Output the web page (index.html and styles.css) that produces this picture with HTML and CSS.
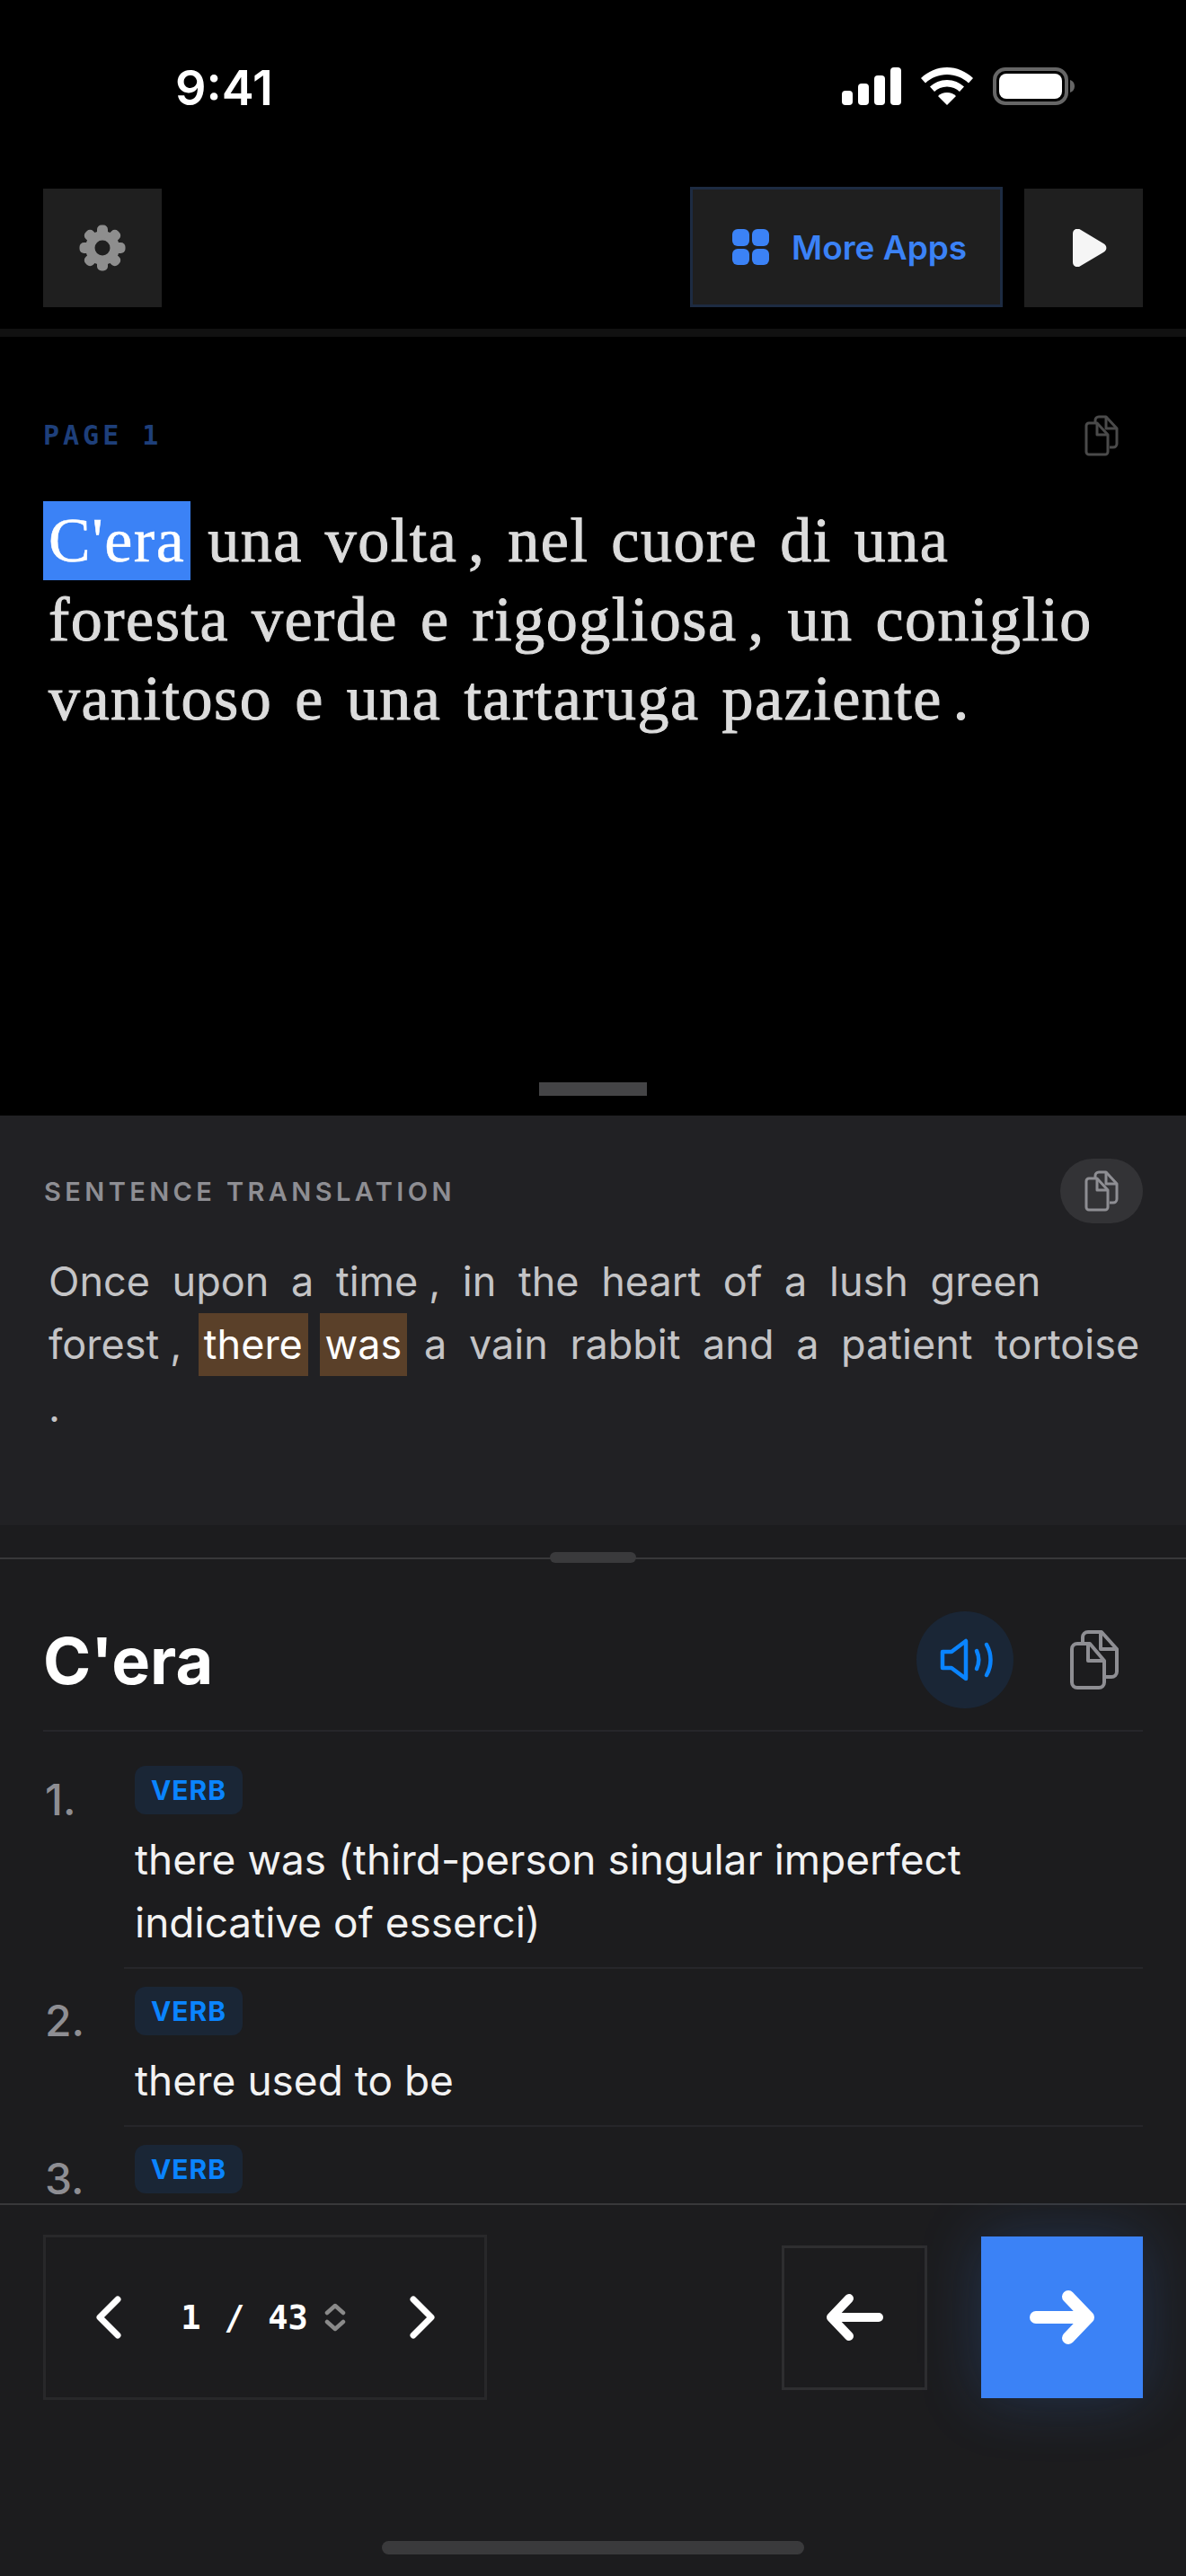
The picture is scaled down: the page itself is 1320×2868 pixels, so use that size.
FILE: index.html
```html
<!DOCTYPE html>
<html lang="it">
<head>
    <meta charset="UTF-8">
    <title>Reader</title>
    <link rel="stylesheet" href="styles.css">
</head>
<body>
<div class="main">
    <div class="status">
        <span class="time">9:41</span>
        <div class="status_icons">
            <svg width="66" height="42" viewBox="0 0 66 42"><rect x="0" y="26" width="12" height="16" rx="4"/><rect x="18" y="18" width="12" height="24" rx="4"/><rect x="36" y="9" width="12" height="33" rx="4"/><rect x="54" y="0" width="12" height="42" rx="4"/></svg>
            <svg width="58" height="42" viewBox="0 0 58 42"><path d="M29 0C18 0 8 4.500 0 12l5 5.500C11.500 11.500 20 8 29 8s17.500 3.500 24 9.500l5-5.500C50 4.500 40 0 29 0z"/><path d="M29 14c-7.500 0-14 3-19 7.500l5 5.500c3.500-3.300 8.500-5.500 14-5.500s10.500 2.200 14 5.500l5-5.500C43 17 36.500 14 29 14z"/><path d="M29 28c-4 0-7.500 1.500-10 4l10 10 10-10c-2.500-2.500-6-4-10-4z"/></svg>
            <svg class="battery" width="92" height="42" viewBox="0 0 92 42"><rect x="2" y="2" width="80" height="38" rx="12" fill="none" stroke="#666" stroke-width="4"/><rect x="7" y="7" width="70" height="28" rx="8"/><path d="M86 14c3 .8 5 3.500 5 7s-2 6.200-5 7z" fill="#666"/></svg>
        </div>
    </div>

    <div class="toolbar">
        <a class="tool_btn" href="#">
            <svg width="52" height="52" viewBox="-26 -26 52 52"><g fill="#8e8e8e"><circle r="19"/><rect x="-6" y="-25.500" width="12" height="51" rx="5"/><rect x="-6" y="-25.500" width="12" height="51" rx="5" transform="rotate(45)"/><rect x="-6" y="-25.500" width="12" height="51" rx="5" transform="rotate(90)"/><rect x="-6" y="-25.500" width="12" height="51" rx="5" transform="rotate(135)"/></g><circle r="8.500" fill="#1f1f1f"/></svg>
        </a>
        <div class="tool_right">
            <a class="apps_btn" href="#">
                <span class="apps_grid"><i></i><i></i><i></i><i></i></span>
                More Apps
            </a>
            <a class="tool_btn" href="#">
                <svg class="play_icon" width="38" height="42" viewBox="0 0 38 42"><path fill="#f5f5f5" d="M0 5C0 1 3.500-1 7-.2L34 16c4.500 2.500 4.500 7.500 0 10L7 42c-3.500 1-7-1-7-5z"/></svg>
            </a>
        </div>
    </div>

    <div class="reader">
        <div class="reader_head">
            <span class="page_label">PAGE 1</span>
            <svg class="copy_small" width="38" height="46" viewBox="0 0 38 46"><g fill="none" stroke="#4a4a4a" stroke-width="3" stroke-linejoin="round"><path d="M12 8V6a4 4 0 0 1 4-4h8l12 13v17a4 4 0 0 1-4 4h-4"/><path d="M24 2v13h12"/><path d="M5 9h9l12 13v19a3 3 0 0 1-3 3H5a3 3 0 0 1-3-3V12a3 3 0 0 1 3-3z"/><path d="M14 9v13h12"/></g></svg>
        </div>
        <p class="reader_text"><span class="word word_active">C'era</span> <span class="word">una</span> <span class="word">volta</span><span class="word">,</span> <span class="word">nel</span> <span class="word">cuore</span> <span class="word">di</span> <span class="word">una</span><br><span class="word">foresta</span> <span class="word">verde</span> <span class="word">e</span> <span class="word">rigogliosa</span><span class="word">,</span> <span class="word">un</span> <span class="word">coniglio</span><br><span class="word">vanitoso</span> <span class="word">e</span> <span class="word">una</span> <span class="word">tartaruga</span> <span class="word">paziente</span><span class="word">.</span></p>
        <div class="grab"></div>
    </div>

    <div class="translation">
        <div class="translation_head">
            <span class="translation_label">SENTENCE TRANSLATION</span>
            <a class="copy_pill" href="#">
                <svg width="38" height="46" viewBox="0 0 38 46"><g fill="none" stroke="#8e8e93" stroke-width="3" stroke-linejoin="round"><path d="M12 8V6a4 4 0 0 1 4-4h8l12 13v17a4 4 0 0 1-4 4h-4"/><path d="M24 2v13h12"/><path d="M5 9h9l12 13v19a3 3 0 0 1-3 3H5a3 3 0 0 1-3-3V12a3 3 0 0 1 3-3z"/><path d="M14 9v13h12"/></g></svg>
            </a>
        </div>
        <p class="translation_text"><span class="word">Once</span> <span class="word">upon</span> <span class="word">a</span> <span class="word">time</span><span class="word">,</span> <span class="word">in</span> <span class="word">the</span> <span class="word">heart</span> <span class="word">of</span> <span class="word">a</span> <span class="word">lush</span> <span class="word">green</span><br><span class="word">forest</span><span class="word">,</span> <span class="word word_mark">there</span> <span class="word word_mark">was</span> <span class="word">a</span> <span class="word">vain</span> <span class="word">rabbit</span> <span class="word">and</span> <span class="word">a</span> <span class="word">patient</span> <span class="word">tortoise</span><br><span class="word">.</span></p>
    </div>

    <div class="sheet">
        <div class="sheet_grab"></div>
        <div class="entry_head">
            <h1>C'era</h1>
            <div class="entry_actions">
                <a class="speak_btn" href="#">
                    <svg class="speak_icon" width="60" height="48" viewBox="0 0 60 48"><g fill="none" stroke="#0a84ff" stroke-width="4.500" stroke-linecap="round" stroke-linejoin="round"><path d="M3 15h10L29 3v42L13 33H3z"/><path d="M41 14c3 6.500 3 13.500 0 20"/><path d="M52 7c6 10.500 6 23.500 0 34"/></g></svg>
                </a>
                <svg width="54" height="66" viewBox="0 0 54 66"><g fill="none" stroke="#8e8e93" stroke-width="4" stroke-linejoin="round"><path d="M14 14V8a6 6 0 0 1 6-6h15l17 19v25a6 6 0 0 1-6 6h-8"/><path d="M34 2v19h18"/><path d="M8 15h14l16 19v24a6 6 0 0 1-6 6H8a6 6 0 0 1-6-6V21a6 6 0 0 1 6-6z"/><path d="M20 15v19h18"/></g></svg>
            </div>
        </div>
        <ol class="defs">
            <li class="def">
                <span class="def_num">1.</span>
                <div class="def_body">
                    <span class="badge">VERB</span>
                    <p>there was (third-person singular imperfect<br>indicative of esserci)</p>
                </div>
            </li>
            <li class="def">
                <span class="def_num">2.</span>
                <div class="def_body">
                    <span class="badge">VERB</span>
                    <p>there used to be</p>
                </div>
            </li>
            <li class="def">
                <span class="def_num">3.</span>
                <div class="def_body">
                    <span class="badge">VERB</span>
                </div>
            </li>
        </ol>
    </div>

    <div class="foot">
        <div class="foot_row">
            <div class="pager">
                <svg width="28" height="48" viewBox="0 0 28 48"><path d="M24 4L4 24l20 20" fill="none" stroke="#fff" stroke-width="7" stroke-linecap="round" stroke-linejoin="round"/></svg>
                <div class="pager_count">
                    <span>1</span><span class="pager_slash">/</span><span>43</span>
                    <svg class="pager_sort" width="24" height="32" viewBox="0 0 24 32"><g fill="none" stroke="#8a8a8a" stroke-width="4.500" stroke-linecap="round" stroke-linejoin="round"><path d="M3 11l9-8 9 8"/><path d="M3 21l9 8 9-8"/></g></svg>
                </div>
                <svg width="28" height="48" viewBox="0 0 28 48"><path d="M4 4l20 20L4 44" fill="none" stroke="#fff" stroke-width="7" stroke-linecap="round" stroke-linejoin="round"/></svg>
            </div>
            <div class="foot_nav">
                <a class="nav_back" href="#">
                    <svg width="63" height="52" viewBox="0 0 63 52"><path d="M25 5L5 26l20 21M5 26h53" fill="none" stroke="#fff" stroke-width="10" stroke-linecap="round" stroke-linejoin="round"/></svg>
                </a>
                <a class="nav_next" href="#">
                    <svg width="72" height="60" viewBox="0 0 72 60"><path d="M43 7l22 23-22 23M7 30h58" fill="none" stroke="#fff" stroke-width="14" stroke-linecap="round" stroke-linejoin="round"/></svg>
                </a>
            </div>
        </div>
        <div class="home_bar"></div>
    </div>
</div>
</body>
</html>
```

FILE: styles.css
```css
* {
    margin: 0;
    padding: 0;
    box-sizing: border-box;
}

body {
    background-color: #000;
    font-family: Inter, "Liberation Sans", sans-serif;
}

.main {
    width: 1320px;
    height: 2868px;
    overflow: hidden;
    background-color: #000;
}

a {
    text-decoration: none;
}

.status {
    height: 210px;
    padding: 68px 123px 0 195px;
    display: flex;
    justify-content: space-between;
    align-items: flex-start;
}

.time {
    color: #fff;
    font-size: 54px;
    font-weight: 600;
    line-height: 60px;
}

.status_icons {
    display: flex;
    gap: 22px;
    padding-top: 7px;
    fill: #fff;
}

.toolbar {
    height: 165px;
    padding: 0 48px 24px;
    display: flex;
    justify-content: space-between;
    align-items: flex-start;
    border-bottom: 9px solid #111;
}

.tool_btn {
    width: 132px;
    height: 132px;
    background-color: #1f1f1f;
    display: flex;
    align-items: center;
    justify-content: center;
}

.play_icon {
    margin-left: 14px;
}

.tool_right {
    display: flex;
    gap: 24px;
}

.apps_btn {
    width: 348px;
    height: 134px;
    margin-top: -2px;
    padding-left: 44px;
    background-color: #1f1f1f;
    border: 3px solid #1d2b42;
    color: #3b82f6;
    font-size: 37px;
    font-weight: 600;
    display: flex;
    align-items: center;
    gap: 25px;
}

.apps_grid {
    width: 41px;
    height: 40px;
    display: grid;
    grid-template-columns: 1fr 1fr;
    gap: 3px;
}

.apps_grid i {
    background-color: #3b82f6;
    border-radius: 6px;
}

.reader {
    height: 867px;
    padding-top: 87px;
    display: flex;
    flex-direction: column;
}

.reader_head {
    height: 45px;
    padding: 0 75px 0 48px;
    display: flex;
    justify-content: space-between;
    align-items: center;
}

.page_label {
    color: #1e3f7a;
    font-family: "DejaVu Sans Mono", monospace;
    font-size: 30px;
    font-weight: 700;
    letter-spacing: 4px;
}

.reader_text {
    margin: 51px 48px 0;
    color: #dcdcdc;
    font-family: "Liberation Serif", serif;
    font-size: 70px;
    line-height: 88px;
    letter-spacing: 1.500px;
    word-spacing: -6px;
    white-space: nowrap;
    -webkit-text-stroke: 1px #dcdcdc;
}

.word {
    display: inline-block;
    padding: 0 6px;
}

.word_active {
    background-color: #3b82f6;
    color: #fff;
    -webkit-text-stroke: 0.500px #fff;
}

.word_mark {
    background-color: #5a4029;
    color: #fff;
}

.grab {
    width: 120px;
    height: 15px;
    background-color: #444446;
    align-self: center;
    margin-top: auto;
    margin-bottom: 22px;
}

.translation {
    height: 456px;
    padding: 48px 48px 0;
    background-color: #212124;
}

.translation_head {
    display: flex;
    justify-content: space-between;
    align-items: center;
}

.translation_label {
    color: #8e8e93;
    font-size: 29px;
    font-weight: 600;
    letter-spacing: 4.400px;
    margin-left: 1px;
}

.copy_pill {
    width: 92px;
    height: 72px;
    border-radius: 36px;
    background-color: #333336;
    display: flex;
    align-items: center;
    justify-content: center;
}

.translation_text {
    margin-top: 30px;
    color: #c4c4c6;
    font-size: 45px;
    line-height: 70px;
    white-space: nowrap;
}

.sheet {
    position: relative;
    height: 755px;
    padding-top: 38px;
    background-color: #1c1c1e;
}

.sheet:before {
    content: "";
    position: absolute;
    left: 0;
    right: 0;
    top: 36px;
    height: 2px;
    background-color: #38383a;
}

.sheet_grab {
    position: absolute;
    top: 30px;
    left: 612px;
    width: 96px;
    height: 12px;
    border-radius: 6px;
    background-color: #3a3a3c;
}

.entry_head {
    margin: 58px 48px 0;
    padding: 0 27px 24px 0;
    display: flex;
    justify-content: space-between;
    align-items: center;
    border-bottom: 2px solid #26262a;
}

.entry_head h1 {
    color: #fff;
    font-size: 72px;
    font-weight: 700;
}

.entry_actions {
    display: flex;
    align-items: center;
    gap: 63px;
}

.speak_btn {
    width: 108px;
    height: 108px;
    border-radius: 50%;
    background-color: #1a2636;
    display: flex;
    align-items: center;
    justify-content: center;
}

.speak_icon {
    margin-left: 3px;
}

.defs {
    list-style: none;
    margin: 18px 48px 0;
}

.def {
    display: flex;
}

.def_num {
    width: 90px;
    padding: 31px 0 0 2px;
    color: #8e8e93;
    font-size: 48px;
    font-weight: 500;
    line-height: 54px;
}

.def_body {
    flex: 1;
    padding: 20px 0 15px 12px;
    border-bottom: 2px solid #26262a;
}

.def:last-child .def_body {
    padding-bottom: 0;
    border-bottom: 0;
}

.def_body p {
    margin-top: 15px;
    color: #f2f2f2;
    font-size: 46px;
    line-height: 70px;
}

.badge {
    display: block;
    width: 120px;
    height: 54px;
    border-radius: 12px;
    background-color: #1a2636;
    color: #0a84ff;
    font-size: 30px;
    font-weight: 700;
    line-height: 54px;
    letter-spacing: 1px;
    text-align: center;
}

.foot {
    height: 415px;
    padding: 33px 48px 0;
    background-color: #1c1c1e;
    border-top: 2px solid #38383a;
    display: flex;
    flex-direction: column;
    align-items: center;
}

.foot_row {
    width: 100%;
    height: 184px;
    display: flex;
    justify-content: space-between;
    align-items: center;
}

.pager {
    width: 494px;
    height: 184px;
    border: 3px solid #28282a;
    padding: 0 55px 0 56px;
    display: flex;
    justify-content: space-between;
    align-items: center;
}

.pager_count {
    margin-right: 5px;
    display: flex;
    align-items: center;
    gap: 26px;
    color: #fff;
    font-family: "DejaVu Sans Mono", monospace;
    font-size: 37px;
    font-weight: 700;
}

.pager_slash {
    font-size: 38px;
}

.pager_sort {
    margin-left: -8px;
}

.foot_nav {
    display: flex;
    align-items: center;
    gap: 60px;
}

.nav_back {
    width: 162px;
    height: 161px;
    border: 3px solid #2e2e30;
    display: flex;
    align-items: center;
    justify-content: center;
}

.nav_next {
    width: 180px;
    height: 180px;
    background-color: #3b82f6;
    box-shadow: 0 0 70px rgba(59, 130, 246, 0.22);
    display: flex;
    align-items: center;
    justify-content: center;
}

.home_bar {
    width: 470px;
    height: 15px;
    margin-top: 157px;
    border-radius: 8px;
    background-color: #3a3a3c;
}
```
